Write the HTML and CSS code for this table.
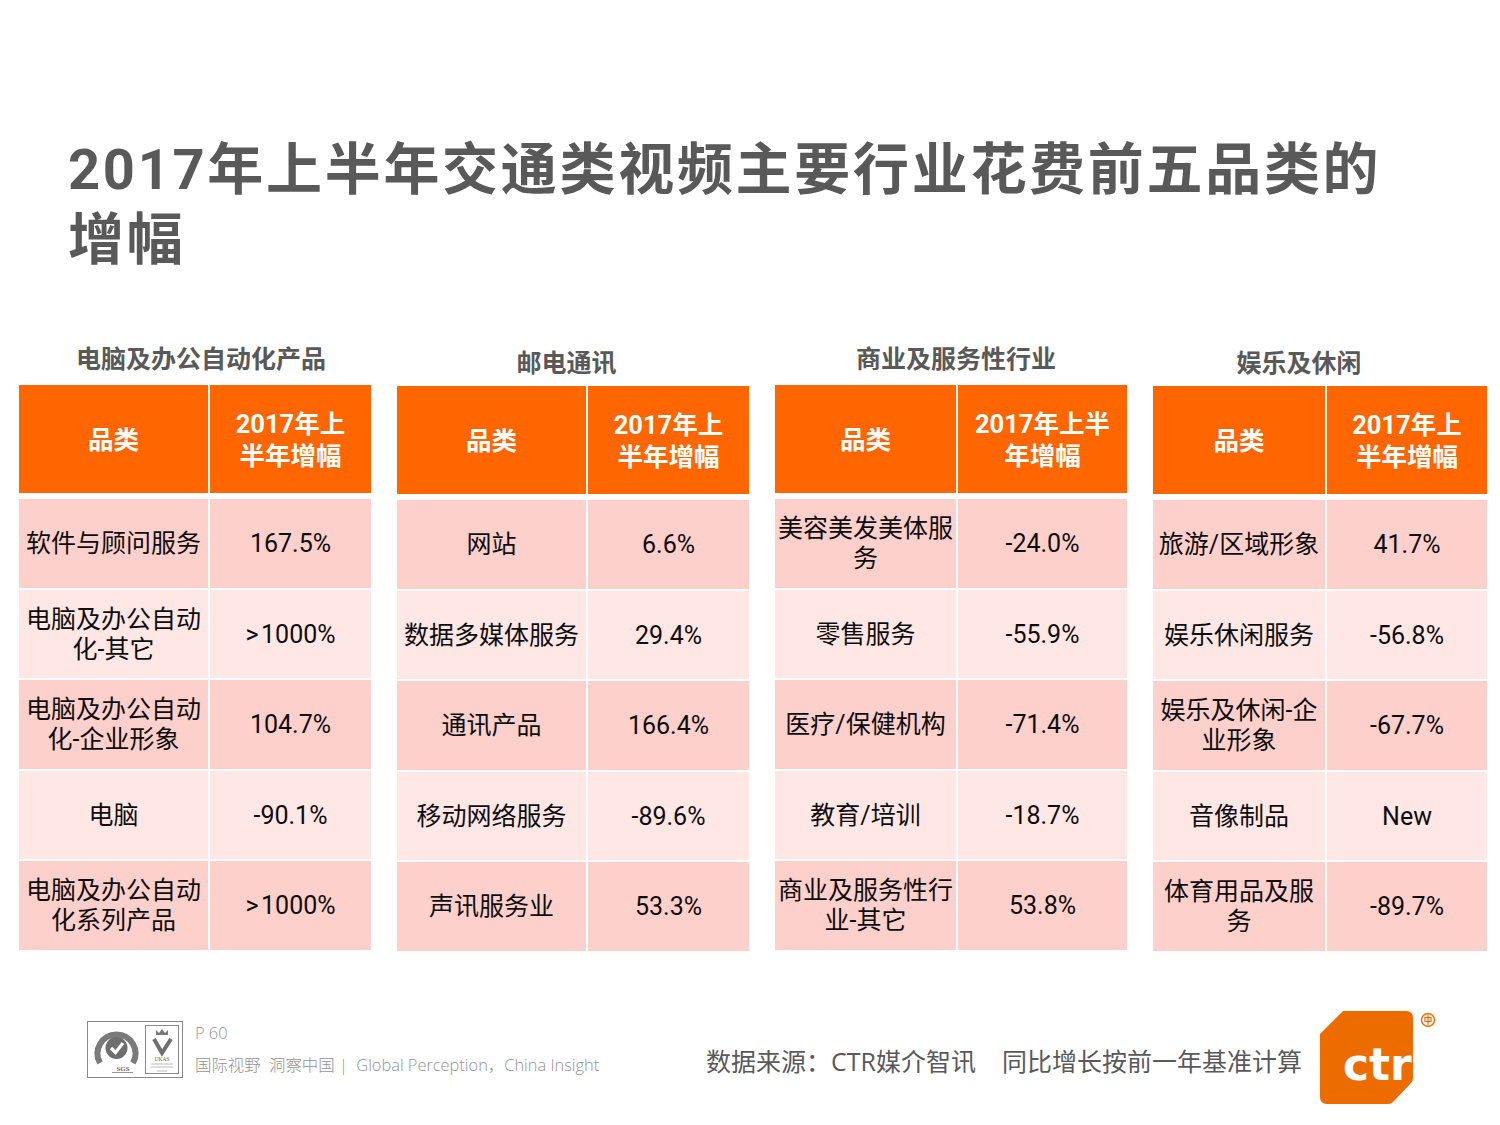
FILE: index.html
```html
<!DOCTYPE html>
<html lang="zh-CN">
<head>
<meta charset="utf-8">
<title>2017年上半年交通类视频主要行业花费前五品类的增幅</title>
<link rel="stylesheet" href="styles.css">
</head>
<body>
<div class="page">
  <h1 class="title">2017年上半年交通类视频主要行业花费前五品类的<br>增幅</h1>

  <div class="tables">
    <section class="panel t1">
      <h2 class="heading h-a">电脑及办公自动化产品</h2>
      <div class="table">
        <div class="row head"><div class="c">品类</div><div class="c">2017年上<br>半年增幅</div></div>
        <div class="row odd"><div class="c">软件与顾问服务</div><div class="c">167.5%</div></div>
        <div class="row even"><div class="c">电脑及办公自动<br>化-其它</div><div class="c">&gt;&#8202;1000%</div></div>
        <div class="row odd"><div class="c">电脑及办公自动<br>化-企业形象</div><div class="c">104.7%</div></div>
        <div class="row even"><div class="c">电脑</div><div class="c">-90.1%</div></div>
        <div class="row odd"><div class="c">电脑及办公自动<br>化系列产品</div><div class="c">&gt;&#8202;1000%</div></div>
      </div>
    </section>

    <section class="panel t2">
      <h2 class="heading h-b">邮电通讯</h2>
      <div class="table">
        <div class="row head"><div class="c">品类</div><div class="c">2017年上<br>半年增幅</div></div>
        <div class="row odd"><div class="c">网站</div><div class="c">6.6%</div></div>
        <div class="row even"><div class="c">数据多媒体服务</div><div class="c">29.4%</div></div>
        <div class="row odd"><div class="c">通讯产品</div><div class="c">166.4%</div></div>
        <div class="row even"><div class="c">移动网络服务</div><div class="c">-89.6%</div></div>
        <div class="row odd"><div class="c">声讯服务业</div><div class="c">53.3%</div></div>
      </div>
    </section>

    <section class="panel t3">
      <h2 class="heading h-c">商业及服务性行业</h2>
      <div class="table">
        <div class="row head"><div class="c">品类</div><div class="c">2017年上半<br>年增幅</div></div>
        <div class="row odd"><div class="c">美容美发美体服<br>务</div><div class="c">-24.0%</div></div>
        <div class="row even"><div class="c">零售服务</div><div class="c">-55.9%</div></div>
        <div class="row odd"><div class="c">医疗/保健机构</div><div class="c">-71.4%</div></div>
        <div class="row even"><div class="c">教育/培训</div><div class="c">-18.7%</div></div>
        <div class="row odd"><div class="c">商业及服务性行<br>业-其它</div><div class="c">53.8%</div></div>
      </div>
    </section>

    <section class="panel t4">
      <h2 class="heading h-d">娱乐及休闲</h2>
      <div class="table">
        <div class="row head"><div class="c">品类</div><div class="c">2017年上<br>半年增幅</div></div>
        <div class="row odd"><div class="c">旅游/区域形象</div><div class="c">41.7%</div></div>
        <div class="row even"><div class="c">娱乐休闲服务</div><div class="c">-56.8%</div></div>
        <div class="row odd"><div class="c">娱乐及休闲-企<br>业形象</div><div class="c">-67.7%</div></div>
        <div class="row even"><div class="c">音像制品</div><div class="c">New</div></div>
        <div class="row odd"><div class="c">体育用品及服<br>务</div><div class="c">-89.7%</div></div>
      </div>
    </section>
  </div>

  <footer class="footer">
    <svg class="iso" width="96" height="57" viewBox="0 0 96 57">
      <rect x="0.5" y="0.5" width="95" height="56" fill="#fff" stroke="#8a8a8a"/>
      <path d="M13 42 A19 19 0 1 1 46 42" fill="none" stroke="#7a7a7a" stroke-width="6"/>
      <circle cx="29.5" cy="27" r="11" fill="#6e6e6e"/>
      <path d="M24 27 L28.5 31.5 L36 22" fill="none" stroke="#fff" stroke-width="3.2"/>
      <text x="36" y="50" font-size="7" font-family="Liberation Serif, serif" font-weight="bold" fill="#666" text-anchor="middle">SGS</text>
      <line x1="25" y1="51.5" x2="46" y2="51.5" stroke="#777" stroke-width="0.8"/>
      <rect x="58.5" y="4.5" width="33" height="48" fill="none" stroke="#8a8a8a"/>
      <path d="M69 14 L69 9 L72 12 L75 8 L78 12 L81 9 L81 14 Z" fill="#777"/>
      <path d="M67 18 L75 32 L84 18" fill="none" stroke="#6e6e6e" stroke-width="4"/>
      <text x="75" y="40" font-size="5.5" font-family="Liberation Serif, serif" fill="#666" text-anchor="middle">UKAS</text>
      <line x1="64" y1="43" x2="86" y2="43" stroke="#aaa" stroke-width="0.8"/>
      <line x1="64" y1="46" x2="86" y2="46" stroke="#aaa" stroke-width="0.8"/>
      <line x1="70" y1="50" x2="80" y2="50" stroke="#aaa" stroke-width="0.8"/>
    </svg>
    <div class="foot-text">
      <div class="page-no">P 60</div>
      <div class="slogan">国际视野&nbsp;&nbsp;洞察中国 | &nbsp;Global Perception，China Insight</div>
    </div>
    <div class="source">数据来源：CTR媒介智讯&nbsp;&nbsp;&nbsp;&nbsp;同比增长按前一年基准计算</div>
    <div class="logo">
      <svg width="93" height="93" viewBox="0 0 93 93">
        <path d="M23 0 H86 Q93 0 93 7 V67 Q93 70 91 72 L73 91 Q71 93 68 93 H7 Q0 93 0 86 V23 Z" fill="#ED6C00"/>
        <text x="23" y="69" font-size="44" font-weight="bold" font-family="DejaVu Sans, sans-serif" fill="#fff">ctr</text>
      </svg>
      <svg class="tm" width="16" height="16" viewBox="0 0 16 16">
        <circle cx="8" cy="8" r="6.5" fill="none" stroke="#ED6C00" stroke-width="1.4"/>
        <rect x="5" y="5.5" width="6" height="4" fill="none" stroke="#ED6C00" stroke-width="1.2"/>
        <line x1="8" y1="3" x2="8" y2="13" stroke="#ED6C00" stroke-width="1.2"/>
      </svg>
    </div>
  </footer>
</div>
</body>
</html>
```

FILE: styles.css
```css
* { box-sizing: border-box; }

html, body {
  margin: 0;
  padding: 0;
  background: #fff;
}

.page {
  width: 1500px;
  height: 1125px;
  overflow: hidden;
  font-family: Roboto, "Noto Sans CJK SC", sans-serif;
}

.title {
  margin: 0;
  padding: 135px 0 0 68px;
  height: 274px;
  font-family: Roboto, "Noto Sans CJK SC", sans-serif;
  font-size: 56px;
  line-height: 70px;
  font-weight: 700;
  color: #595959;
  letter-spacing: 2.7px;
}

.tables {
  display: flex;
  gap: 26px;
  padding-left: 19px;
  margin-top: 66px;
}

.panel {
  display: flex;
  flex-direction: column;
}

.t1, .t2, .t3 { width: 352px; }
.t4 { width: 334px; }

.heading {
  margin: 0 0 11px;
  height: 34px;
  font-family: "Noto Sans CJK SC", sans-serif;
  font-size: 25px;
  line-height: 34px;
  font-weight: 700;
  color: #595959;
  text-align: center;
  white-space: nowrap;
}

.h-a { padding-left: 12px; }
.h-b { padding-right: 13px; padding-top: 4px; height: 38px; margin-bottom: 8px; }
.h-c { padding-left: 10px; }
.h-d { padding-right: 42px; padding-top: 4px; height: 38px; margin-bottom: 8px; }

.table {
  display: flex;
  flex-direction: column;
  gap: 2px;
}

.row {
  display: grid;
  gap: 2px;
  height: 88.5px;
}

.t1 .row, .t2 .row { grid-template-columns: 189px 161px; }
.t3 .row { grid-template-columns: 181px 169px; }
.t4 .row { grid-template-columns: 172px 160px; }

.row.head {
  height: 108px;
  margin-bottom: 4px;
}

.c {
  display: flex;
  align-items: center;
  justify-content: center;
  text-align: center;
  padding: 2px 2px 0;
  font-family: Roboto, "Noto Sans CJK SC", sans-serif;
  font-size: 25px;
  line-height: 30px;
  color: #0d0d0d;
  white-space: nowrap;
}

.head .c {
  background: #FF6600;
  color: #fff;
  padding-top: 2px;
  font-size: 25.5px;
  font-weight: 700;
  line-height: 32px;
}

.odd .c { background: #FDD0CB; }
.even .c { background: #FEE7E5; }

.footer {
  display: flex;
  align-items: flex-start;
  margin-top: 60px;
  height: 93px;
  padding-left: 87px;
  padding-right: 87px;
}

.iso {
  display: block;
  margin-top: 10px;
  flex: none;
}

.foot-text {
  margin-left: 12px;
  margin-top: 12px;
  color: #939393;
  font-family: "Open Sans", "Noto Sans CJK SC", sans-serif;
  font-size: 16.4px;
  font-weight: 300;
  line-height: 20px;
}

.slogan {
  margin-top: 12px;
  white-space: nowrap;
}

.source {
  margin-left: auto;
  margin-top: 33px;
  font-family: "Open Sans", "Noto Sans CJK SC", sans-serif;
  font-size: 25px;
  line-height: 34px;
  color: #595959;
  white-space: nowrap;
}

.logo {
  position: relative;
  margin-left: 18px;
  width: 93px;
  height: 93px;
  flex: none;
}

.logo svg { display: block; }

.tm {
  position: absolute;
  left: 100px;
  top: 1px;
}
```
